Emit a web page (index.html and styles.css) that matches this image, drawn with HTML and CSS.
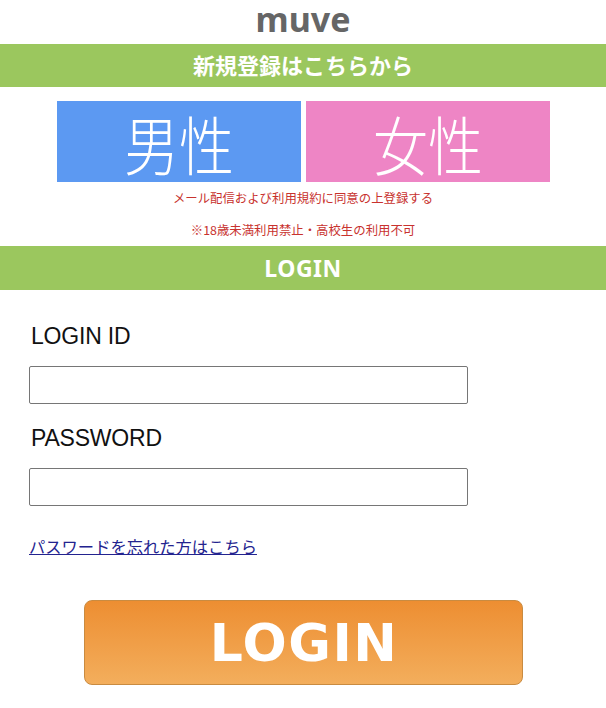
FILE: index.html
```html
<!DOCTYPE html>
<html lang="ja">
<head>
    <meta charset="UTF-8">
    <meta name="viewport" content="width=device-width, initial-scale=1.0">
    <title>muve</title>
    <link rel="stylesheet" href="styles.css">
</head>
<body>
    <header class="site-title">muve</header>

    <h2 class="band">新規登録はこちらから</h2>
    <div class="gender">
        <a href="#" class="gender-btn male"><span>男性</span></a>
        <a href="#" class="gender-btn female"><span>女性</span></a>
    </div>
    <p class="notice">メール配信および利用規約に同意の上登録する</p>
    <p class="notice">※18歳未満利用禁止・高校生の利用不可</p>

    <h2 class="band login-band">LOGIN</h2>
    <form class="login-form" onsubmit="return false;">
        <label class="field-label" for="login-id">LOGIN ID</label>
        <input class="field" type="text" id="login-id">
        <label class="field-label pass-label" for="password">PASSWORD</label>
        <input class="field" type="password" id="password">
        <a href="#" class="forgot">パスワードを忘れた方はこちら</a>
        <button class="login-btn" type="submit">LOGIN</button>
    </form>
</body>
</html>
```

FILE: styles.css
```css
body {
    margin: 0;
    padding: 0;
    background-color: #fff;
    font-family: 'Noto Sans', 'Noto Sans CJK JP', sans-serif;
    color: #222;
}
.site-title {
    height: 44px;
    padding-top: 2px;
    box-sizing: border-box;
    line-height: 34px;
    text-align: center;
    font-size: 34px;
    font-weight: bold;
    color: #666;
}
.band {
    margin: 0;
    height: 43px;
    line-height: 43px;
    background-color: #9bc75e; /* зелена смуга */
    color: #fff;
    text-align: center;
    font-size: 22px;
    font-weight: bold;
    font-family: 'Noto Sans', 'Noto Sans CJK JP', sans-serif;
}
.gender {
    display: flex;
    justify-content: center;
    gap: 5px;
    margin-top: 14px;
}
.gender-btn {
    display: flex;
    align-items: center;
    justify-content: center;
    width: 244px;
    height: 81px;
    color: #fff;
    text-decoration: none;
    font-family: 'Noto Sans CJK JP', sans-serif;
    font-weight: 300;
    font-size: 64px;
}
.gender-btn span {
    display: block;
    transform: scaleX(0.86);
}
.male {
    background-color: #5c99f2;
}
.female {
    background-color: #ee85c5;
}
.notice {
    margin: 0;
    line-height: 32px;
    text-align: center;
    font-size: 12.4px;
    color: #c8322e;
    font-family: 'Noto Sans CJK JP', sans-serif;
}
.login-band {
    height: 44px;
    line-height: 44px;
    font-size: 23px;
    letter-spacing: 0.5px;
}
.login-form {
    padding: 31px 29px 0;
}
.field-label {
    display: block;
    line-height: 30px;
    margin-bottom: 15px;
    font-family: 'Liberation Sans', Arial, sans-serif;
    font-size: 23px;
    letter-spacing: -0.2px;
    color: #111;
    padding-left: 2px;
}
.pass-label {
    margin-top: 19px;
}
.field {
    display: block;
    box-sizing: border-box;
    width: 439px;
    height: 38px;
    margin: 0;
    border: 1px solid #767676;
    border-radius: 2px;
    background: #fff;
}
.forgot {
    display: inline-block;
    margin-top: 28px;
    line-height: 24px;
    font-size: 16.3px;
    color: #23238f;
    font-family: 'Noto Sans CJK JP', sans-serif;
}
.login-btn {
    display: block;
    box-sizing: border-box;
    width: 439px;
    height: 85px;
    margin: 42px auto 0;
    border: 1px solid #c98b41;
    border-radius: 8px;
    background: linear-gradient(#ed8e32, #f3ae5c);
    color: #fff;
    font-family: 'DejaVu Sans', sans-serif;
    font-weight: bold;
    font-size: 52px;
    letter-spacing: 1.5px;
    padding: 0 0 0 2px;
}
```
